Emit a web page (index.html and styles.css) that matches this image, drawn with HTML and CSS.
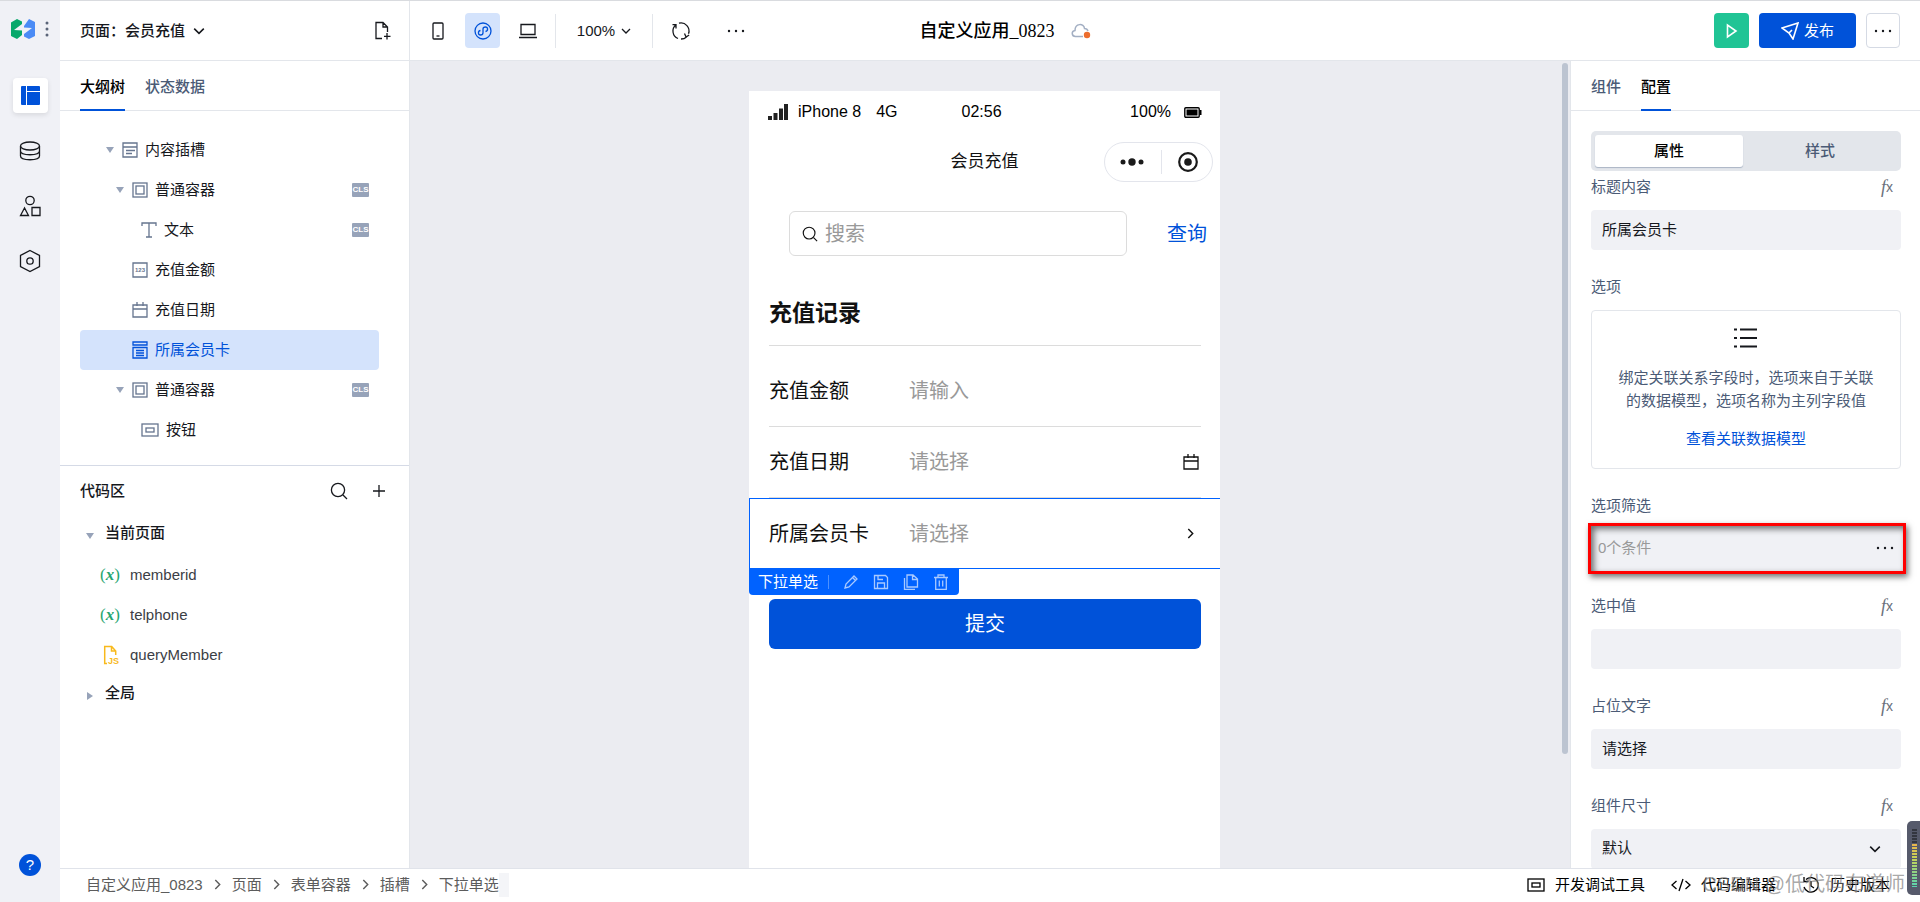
FILE: index.html
```html
<!DOCTYPE html>
<html lang="zh-CN">
<head>
<meta charset="utf-8">
<title>自定义应用_0823</title>
<link rel="stylesheet" href="styles.css">
</head>
<body>
<svg class="defs" width="0" height="0" aria-hidden="true">
  <symbol id="chev-down" viewBox="0 0 10 10"><path d="M1 3l4 4 4-4"/></symbol>
  <symbol id="chev-right" viewBox="0 0 10 10"><path d="M3 1l4 4-4 4"/></symbol>
  <symbol id="box" viewBox="0 0 16 16"><rect x="1" y="1" width="14" height="14"/><rect x="4" y="4" width="8" height="8"/></symbol>
  <symbol id="calendar" viewBox="0 0 16 16"><path d="M1 3h14v12H1zM1 7h14M5 0v4M11 0v4"/></symbol>
  <symbol id="button-box" viewBox="0 0 18 14"><rect x="1" y="1" width="16" height="12"/><rect x="5" y="5" width="8" height="4"/></symbol>
  <symbol id="search" viewBox="0 0 18 18"><circle cx="8" cy="8" r="6.6"/><path d="M13 13l4 4"/></symbol>
  <symbol id="dots" viewBox="0 0 18 4"><g fill="currentColor" stroke="none"><circle cx="2" cy="2" r="1.2"/><circle cx="9" cy="2" r="1.2"/><circle cx="16" cy="2" r="1.2"/></g></symbol>
</svg>
<div class="app">
  <nav class="rail">
    <div class="brand">
      <svg width="24" height="20" viewBox="0 0 24 20">
        <path fill="#07a86b" d="M6 0l5 2.500V5L7 8l-4 3 8 .5V16l-5 4-6-3V3.500z"/>
        <path fill="#4b8bf5" d="M18 0l6 3v14l-6 3-5-2.500V15l4-3 4-3-8-.5V7z"/>
      </svg>
      <svg width="4" height="16" viewBox="0 0 4 16" fill="#5a6478"><circle cx="2" cy="2" r="1.5"/><circle cx="2" cy="8" r="1.5"/><circle cx="2" cy="14" r="1.5"/></svg>
    </div>
    <button class="rail-btn active" aria-label="页面"><svg width="19" height="19" viewBox="0 0 19 19" fill="#0052d9"><path d="M1 0h4v19H1a1 1 0 0 1-1-1V1a1 1 0 0 1 1-1zM6 0h12a1 1 0 0 1 1 1v4H6zM6 6h13v12a1 1 0 0 1-1 1H6z"/></svg></button>
    <button class="rail-btn" aria-label="数据"><svg class="line" width="22" height="20" viewBox="0 0 22 20"><ellipse cx="11" cy="5" rx="9.5" ry="4"/><path d="M1.5 5v10c0 5 19 5 19 0V5M1.5 10c0 5 19 5 19 0"/></svg></button>
    <button class="rail-btn" aria-label="组件"><svg class="line" width="22" height="22" viewBox="0 0 22 22"><circle cx="11" cy="5.500" r="4.200"/><path d="M5.500 13l-4 7.500h8zM13 12.500h8v8h-8z"/></svg></button>
    <button class="rail-btn" aria-label="设置"><svg class="line" width="22" height="24" viewBox="0 0 22 24"><path d="M11 1.500l9.500 5v11l-9.500 5-9.500-5v-11z"/><circle cx="11" cy="12" r="3.200"/></svg></button>
    <button class="help" aria-label="帮助">?</button>
  </nav>

  <header class="header">
    <div class="page-pick">
      <button class="page-name">页面：会员充值<svg class="line" width="12" height="12"><use href="#chev-down"/></svg></button>
      <button class="plain" aria-label="新建页面"><svg class="line" width="18" height="20" viewBox="0 0 18 20"><path d="M8 17.500H2V1.500h7l4.500 4.500v5M9 1.500V6h4.500M13 12v6.500M10 15.300h6.500"/></svg></button>
    </div>
    <div class="header-mid">
      <div class="tools">
        <button class="tool" aria-label="手机"><svg class="line" width="12" height="18" viewBox="0 0 12 18"><rect x="1" y="1" width="10" height="16" rx="1"/><path d="M4.500 14h3"/></svg></button>
        <button class="tool on" aria-label="小程序"><svg class="line" width="18" height="18" viewBox="0 0 18 18"><circle cx="9" cy="9" r="8"/><path d="M6.500 8.500C3.500 9 4 13 6.500 13 8 13 9 12 9 10.800V7C9 6 10 5 11.500 5c2.500 0 3 4 0 4.500"/></svg></button>
        <button class="tool" aria-label="桌面"><svg class="line" width="18" height="16" viewBox="0 0 18 16"><path d="M2 1.500h14v10H2zM0 14.500h18"/></svg></button>
        <button class="zoom">100%<svg class="line" width="10" height="10"><use href="#chev-down"/></svg></button>
        <button class="tool" aria-label="刷新"><svg class="line" width="20" height="20" viewBox="0 0 20 20"><path d="M7 17.500A8 8 0 0 1 5 3.800M8 2.200a8 8 0 0 1 9.500 10.500M15.500 16A8 8 0 0 1 10 18M5 7.500V3.700H1.500M13.500 12.500l1.600 3.500 3-2"/></svg></button>
        <button class="tool more" aria-label="更多"><svg width="18" height="4"><use href="#dots"/></svg></button>
      </div>
      <div class="title"><h1>自定义应用_0823</h1>
        <svg width="20" height="16" viewBox="0 0 20 16" fill="none" stroke="#a3afc3" stroke-width="1.500"><path d="M12 13.500H4.500C.5 13.500 0 8 4 7.500 4 0 13 0 13.500 5.500c1.500 0 3 1 3.500 2.500"/><circle cx="16" cy="12" r="3.200" fill="#ed6e2e" stroke="none"/></svg>
      </div>
    </div>
    <div class="actions">
      <button class="play" aria-label="预览"><svg width="12" height="16" viewBox="0 0 12 16"><path d="M1.500 2v12l8.500-6z"/></svg></button>
      <button class="publish"><svg width="18" height="18" viewBox="0 0 18 18"><path d="M1 6l16-5-5 16-4-6zM8 11l3-3"/></svg>发布</button>
      <button class="etc" aria-label="更多"><svg width="18" height="4"><use href="#dots"/></svg></button>
    </div>
  </header>

  <aside class="left">
    <div class="tabs"><button class="tab current">大纲树</button><button class="tab">状态数据</button></div>
    <ul class="tree">
      <li class="node d0"><i class="caret"></i><svg class="ico" width="16" height="16" viewBox="0 0 16 16"><path d="M1 1h14v14H1zM1 5h14M4 8.500h9M4 11.500h6"/></svg>内容插槽</li>
      <li class="node d1"><i class="caret"></i><svg class="ico" width="16" height="16"><use href="#box"/></svg>普通容器<b class="cls">CLS</b></li>
      <li class="node d2"><svg class="ico" width="16" height="16" viewBox="0 0 16 16"><path d="M1 4V1h14v3M8 1v14M5 15h6"/></svg>文本<b class="cls">CLS</b></li>
      <li class="node d1 leaf"><svg class="ico" width="16" height="16" viewBox="0 0 16 16"><path d="M1 1h14v14H1z"/><text x="8" y="10" text-anchor="middle" class="t123">123</text></svg>充值金额</li>
      <li class="node d1 leaf"><svg class="ico" width="16" height="16"><use href="#calendar"/></svg>充值日期</li>
      <li class="node d1 leaf selected"><svg class="ico" width="16" height="18" viewBox="0 0 16 18"><path d="M1 1h14v3H1zM1 6.500h14V17H1zM4 9.500h8M4 12h8M4 14.500h8"/></svg>所属会员卡</li>
      <li class="node d1"><i class="caret"></i><svg class="ico" width="16" height="16"><use href="#box"/></svg>普通容器<b class="cls">CLS</b></li>
      <li class="node d2"><svg class="ico" width="18" height="14"><use href="#button-box"/></svg>按钮</li>
    </ul>
    <section class="code">
      <div class="code-head"><h2>代码区</h2>
        <button class="plain" aria-label="搜索"><svg class="line" width="18" height="18"><use href="#search"/></svg></button>
        <button class="plain" aria-label="添加"><svg class="line" width="12" height="12" viewBox="0 0 12 12"><path d="M6 0v12M0 6h12"/></svg></button>
      </div>
      <div class="group"><i class="caret"></i>当前页面</div>
      <ul class="vars">
        <li><span class="var">(<em>x</em>)</span>memberid</li>
        <li><span class="var">(<em>x</em>)</span>telphone</li>
        <li><span class="js"><svg width="17" height="20" viewBox="0 0 17 20"><path d="M4 18.500H1.700V1.500h7l4 4.500v4M8.500 1.500V6h4"/><text x="5" y="19">JS</text></svg></span>queryMember</li>
      </ul>
      <div class="group"><i class="caret closed"></i>全局</div>
    </section>
  </aside>

  <main class="canvas">
    <div class="phone">
      <div class="status">
        <svg width="20" height="16" viewBox="0 0 20 16" fill="#222"><path d="M0 12h4v4H0zM5.500 9h4v7h-4zM11 4.500h4V16h-4zM16 0h4v16h-4z"/></svg>
        <span class="carrier">iPhone 8</span><span>4G</span>
        <span class="clock">02:56</span>
        <span class="power">100%</span>
        <svg width="18" height="11" viewBox="0 0 18 11"><rect x=".8" y=".8" width="14.400" height="9.400" rx="1" fill="none" stroke="#000" stroke-width="1.400"/><path d="M2.500 2.500h11v6h-11zM15.500 3h2v5h-2z"/></svg>
      </div>
      <div class="navbar"><span class="nav-title">会员充值</span>
        <div class="capsule">
          <svg width="24" height="8" viewBox="0 0 24 8" fill="#1a1a1a"><circle cx="3" cy="4" r="2.500"/><circle cx="12" cy="4" r="3.700"/><circle cx="21" cy="4" r="2.500"/></svg>
          <i></i>
          <svg width="20" height="20" viewBox="0 0 20 20"><circle cx="10" cy="10" r="8.800" fill="none" stroke="#1a1a1a" stroke-width="2.200"/><circle cx="10" cy="10" r="3.800" fill="#1a1a1a"/></svg>
        </div>
      </div>
      <div class="search-row">
        <label class="search-box"><svg class="line" width="16" height="16"><use href="#search"/></svg><input type="text" placeholder="搜索" aria-label="搜索"></label>
        <a href="#" class="query">查询</a>
      </div>
      <div class="form">
        <h2>充值记录</h2>
        <div class="field first"><label for="amount">充值金额</label><input id="amount" type="text" placeholder="请输入"></div>
        <div class="field"><label for="date">充值日期</label><input id="date" type="text" placeholder="请选择"><svg class="line" width="16" height="16"><use href="#calendar"/></svg></div>
        <div class="field picked"><label for="card">所属会员卡</label><input id="card" type="text" placeholder="请选择"><svg class="line" width="11" height="11"><use href="#chev-right"/></svg>
          <div class="float-bar"><span>下拉单选</span>
            <button aria-label="编辑"><svg width="16" height="16" viewBox="0 0 16 16"><path d="M2 14l1-4 8-8 3 3-8 8zM9.500 3.500l3 3"/></svg></button>
            <button aria-label="保存"><svg width="16" height="16" viewBox="0 0 16 16"><path d="M1.500 1.500h11l2 2v11h-13zM4.500 14V9h7v5M5 2v3.500h5"/></svg></button>
            <button aria-label="复制"><svg width="16" height="16" viewBox="0 0 16 16"><path d="M4 1h6l4.500 4v8H4zM9.500 1v4.500h5M1.500 4v11.500H12"/></svg></button>
            <button aria-label="删除"><svg width="16" height="16" viewBox="0 0 16 16"><path d="M1 3.500h14M2.700 3.500v12h10.600v-12M5 3V1h6v2M6.300 6.500v6M9.700 6.500v6"/></svg></button>
          </div>
        </div>
        <button class="submit">提交</button>
      </div>
    </div>
    <i class="scrollbar"></i>
  </main>

  <aside class="right">
    <div class="tabs"><button class="tab">组件</button><button class="tab current">配置</button></div>
    <div class="config">
      <div class="segment"><button class="seg on">属性</button><button class="seg">样式</button></div>
      <div class="item"><div class="cap"><label for="c-title">标题内容</label><button class="fx" aria-label="表达式"><i>f</i>x</button></div><input id="c-title" type="text" value="所属会员卡"></div>
      <div class="item"><div class="cap"><span>选项</span></div>
        <div class="options">
          <svg class="line" width="24" height="20" viewBox="0 0 24 20"><path d="M0 1.500h3M6 1.500h17M0 10h3M6 10h17M0 18.500h3M6 18.500h17"/></svg>
          <p>绑定关联关系字段时，选项来自于关联<br>的数据模型，选项名称为主列字段值</p>
          <a href="#">查看关联数据模型</a>
        </div></div>
      <div class="item"><div class="cap"><span>选项筛选</span></div>
        <div class="filter">0个条件<button class="plain" aria-label="编辑条件"><svg width="18" height="4"><use href="#dots"/></svg></button></div></div>
      <div class="item"><div class="cap"><label for="c-val">选中值</label><button class="fx" aria-label="表达式"><i>f</i>x</button></div><input id="c-val" type="text"></div>
      <div class="item"><div class="cap"><label for="c-ph">占位文字</label><button class="fx" aria-label="表达式"><i>f</i>x</button></div><input id="c-ph" type="text" value="请选择"></div>
      <div class="item"><div class="cap"><label for="c-size">组件尺寸</label><button class="fx" aria-label="表达式"><i>f</i>x</button></div>
        <div class="select"><select id="c-size"><option>默认</option></select><svg class="line" width="12" height="12"><use href="#chev-down"/></svg></div></div>
    </div>
  </aside>

  <footer class="footer">
    <nav class="crumbs">
      <a href="#">自定义应用_0823</a><svg class="line" width="11" height="11"><use href="#chev-right"/></svg>
      <a href="#">页面</a><svg class="line" width="11" height="11"><use href="#chev-right"/></svg>
      <a href="#">表单容器</a><svg class="line" width="11" height="11"><use href="#chev-right"/></svg>
      <a href="#">插槽</a><svg class="line" width="11" height="11"><use href="#chev-right"/></svg>
      <a href="#" class="here">下拉单选</a>
    </nav>
    <div class="dev">
      <button><svg class="line" width="18" height="14"><use href="#button-box"/></svg>开发调试工具</button>
      <button><svg class="line" width="20" height="14" viewBox="0 0 20 14"><path d="M5.500 3L1 7l4.500 4M14.500 3L19 7l-4.500 4M12 1L8 13"/></svg>代码编辑器</button>
      <button><svg class="line" width="18" height="18" viewBox="0 0 18 18"><path d="M4 3.500A7.300 7.300 0 1 1 2 11M2 1v4.500h4.500M9 5v5l3 2"/></svg>历史版本</button>
    </div>
  </footer>
  <div class="watermark">CSDN @低代码布道师</div>
  <div class="meter"><i></i></div>
</div>
</body>
</html>
```
FILE: styles.css
```css
* { box-sizing: border-box; }
body {
  margin: 0;
  font: 15px/24px "Liberation Sans", "Noto Sans CJK SC", sans-serif;
  color: #16181d;
}
button, input, select { font: inherit; color: inherit; border: 0; padding: 0; background: none; outline: 0; }
button { display: flex; align-items: center; justify-content: center; cursor: pointer; }
a { color: inherit; text-decoration: none; }
ul { list-style: none; margin: 0; padding: 0; }
h1, h2, p { margin: 0; }
svg { flex: none; }
.defs { position: absolute; }
.line { fill: none; stroke: currentColor; stroke-width: 1.3; }
.plain { flex: none; }

.app {
  position: relative;
  height: 100vh;
  overflow: hidden;
  display: grid;
  grid-template: 60px minmax(0, 1fr) 34px / 60px 350px minmax(0, 1fr) 350px;
  grid-template-areas:
    "rail head head head"
    "rail left canvas right"
    "rail foot foot foot";
  border-top: 1px solid #d9dbdf;
}

/* icon rail */
.rail {
  grid-area: rail;
  background: #f0f1f6;
  display: flex;
  flex-direction: column;
  align-items: center;
  gap: 20px;
  padding: 16px 0 26px;
}
.brand { display: flex; align-items: center; gap: 10px; height: 24px; margin-bottom: 17px; }
.rail-btn { width: 35px; height: 35px; border-radius: 4px; }
.rail-btn.active { background: #fff; box-shadow: 0 2px 5px #0000001a; }
.help {
  width: 22px; height: 22px;
  margin-top: auto;
  border-radius: 50%;
  background: #0052d9;
  color: #fff;
}

/* header */
.header {
  grid-area: head;
  display: grid;
  grid-template-columns: 350px minmax(0, 1fr) 350px;
  border-bottom: 1px solid #e3e6eb;
}
.page-pick {
  display: flex;
  align-items: center;
  justify-content: space-between;
  padding: 0 17px 0 20px;
  border-right: 1px solid #e3e6eb;
}
.page-name { gap: 8px; font-weight: 500; }
.header-mid { display: grid; grid-template-columns: 1fr auto 1fr; align-items: center; }
.tools { display: flex; align-items: center; gap: 10px; padding-left: 10px; }
.tool { width: 35px; height: 35px; border-radius: 4px; }
.tool.on { background: #d4e3fc; color: #0052d9; }
.more { margin-left: 10px; }
.zoom {
  gap: 6px;
  width: 98px; height: 34px;
  border: solid #e3e6eb;
  border-width: 0 1px;
}
.title { display: flex; align-items: center; gap: 16px; padding-left: 30px; }
.title h1 { font: 500 18px/24px "Liberation Serif", "Noto Sans CJK SC", serif; color: #000; }
.actions { display: flex; align-items: center; justify-content: flex-end; gap: 10px; padding-right: 20px; }
.actions button { height: 35px; border-radius: 4px; }
.play { width: 35px; background: #20c495; }
.play svg, .publish svg { fill: none; stroke: #fff; stroke-width: 1.6; }
.publish { width: 97px; gap: 5px; background: #0052d9; color: #fff; }
.actions .etc { width: 34px; border: 1px solid #d5dae4; }

/* shared tabs */
.tabs { display: flex; gap: 20px; height: 50px; padding: 0 20px; border-bottom: 1px solid #e3e6eb; flex: none; }
.tab { height: 50px; padding-top: 3px; border-bottom: 2px solid transparent; color: #4b5b76; font-weight: 500; }
.tab.current { color: #000; border-color: #0052d9; }

/* outline panel */
.left { grid-area: left; border-right: 1px solid #e3e6eb; overflow: hidden; }
.tree { padding: 19px 30px 15px 20px; border-bottom: 1px solid #d5dae6; }
.node {
  display: flex;
  align-items: center;
  gap: 7px;
  height: 40px;
  border-radius: 4px;
}
.d0 { padding-left: 26px; }
.d1 { padding-left: 36px; }
.d2 { padding-left: 61px; }
.leaf { padding-left: 52px; }
.ico { fill: none; stroke: #66758f; stroke-width: 1.3; }
.t123 { font: bold 6px "Liberation Sans", sans-serif; fill: #66758f; stroke: none; }
.selected { background: #d4e3fc; color: #0052d9; }
.selected .ico { stroke: #0052d9; }
.caret { width: 8px; height: 6px; margin-right: 1px; background: #97a3b9; clip-path: polygon(0 0, 100% 0, 50% 100%); }
.caret.closed { width: 6px; height: 8px; margin: 0 2px 0 1px; clip-path: polygon(0 0, 100% 50%, 0 100%); }
.cls {
  margin: 0 10px 0 auto;
  width: 17px;
  background: #97a3b9;
  border-radius: 1px;
  color: #fff;
  font: bold 8px/14px "Liberation Sans", sans-serif;
  text-align: center;
}
.code { padding: 5px 24px 0 20px; }
.code-head { display: flex; align-items: center; gap: 25px; height: 40px; }
.code-head h2 { flex: 1; font-size: 15px; font-weight: 500; }
.group { display: flex; align-items: center; gap: 10px; height: 44px; padding-left: 6px; font-weight: 500; }
.group .caret { align-self: flex-end; margin-bottom: 16px; }
.vars + .group { height: 36px; }
.vars + .group .caret { margin-bottom: 11px; }
.vars li { display: flex; align-items: center; height: 40px; padding-left: 20px; color: #3b3e45; }
.var, .js { width: 30px; color: #27a56f; font: 17px/24px "Liberation Serif", serif; }
.var em { font-weight: bold; }
.js { display: flex; align-items: center; padding-left: 3px; }
.js svg { fill: none; stroke: #f8b91c; stroke-width: 1.5; }
.js text { font: bold 9px "Liberation Sans", sans-serif; fill: #f8b91c; stroke: none; }

/* canvas */
.canvas { grid-area: canvas; position: relative; background: #ebecf1; padding-top: 30px; overflow: hidden; }
.phone { width: 471px; height: 100%; margin-left: 339px; background: #fff; color: #111; }
.status { display: flex; align-items: center; height: 42px; padding: 0 18px 0 19px; font-size: 16px; color: #000; }
.status .carrier { margin: 0 15px 0 10px; }
.status .clock { margin-left: 64px; }
.status .power { margin: 0 13px 0 auto; }
.navbar {
  display: grid;
  grid-template-columns: 1fr auto 1fr;
  align-items: center;
  height: 58px;
  padding: 0 7px;
}
.nav-title { grid-column: 2; font-size: 17px; }
.capsule {
  display: flex;
  align-items: center;
  justify-content: space-between;
  justify-self: end;
  width: 109px; height: 40px;
  padding: 0 14px 0 15px;
  border: 1px solid #e3e5ec;
  border-radius: 20px;
}
.capsule i { width: 1px; height: 24px; background: #e3e5ec; }
.search-row { display: flex; align-items: center; gap: 40px; padding: 20px 13px 0 40px; font-size: 20px; }
.search-box {
  flex: 1;
  display: flex;
  align-items: center;
  gap: 7px;
  height: 45px;
  padding: 0 12px;
  border: 1px solid #dcdcdc;
  border-radius: 6px;
}
.search-box input { flex: 1; min-width: 0; }
.phone input::placeholder { color: #999; opacity: 1; }
.query { color: #0052d9; }
.form { padding: 0 19px 0 20px; font-size: 20px; }
.form h2 { padding: 41px 0 16px; font-size: 23px; line-height: 32px; border-bottom: 1px solid #dcdcdc; }
.field { display: flex; align-items: center; height: 71px; border-bottom: 1px solid #dcdcdc; }
.field.first { height: 81px; padding-top: 10px; }
.field label { width: 140px; }
.field input { flex: 1; min-width: 0; }
.field > svg { margin-right: 2px; }
.field.picked {
  position: relative;
  margin: 0 -19px 30px -20px;
  padding: 0 22px 0 19px;
  border: solid #0062ff;
  border-width: 1px 0 1px 1px;
}
.float-bar {
  position: absolute;
  left: -1px; top: 100%;
  display: flex;
  align-items: center;
  gap: 14px;
  height: 27px;
  padding: 0 10px 0 9px;
  background: #0062ff;
  border-radius: 0 0 4px 4px;
  color: #fff;
  font-size: 15px;
}
.float-bar span { padding-right: 10px; border-right: 1px solid #4c91ff; line-height: 14px; }
.float-bar svg { fill: none; stroke: #a8c9ff; stroke-width: 1.3; }
.submit { width: 100%; height: 50px; border-radius: 6px; background: #0052d9; color: #fff; }
.scrollbar { position: absolute; right: 2px; top: 2px; width: 6px; height: 691px; max-height: 100%; border-radius: 3px; background: #bcc4d1; }

/* config panel */
.right { grid-area: right; display: flex; flex-direction: column; border-left: 1px solid #e3e6eb; overflow: hidden; }
.config { padding: 20px 19px 0 20px; overflow: hidden; }
.segment { display: flex; height: 40px; margin-bottom: 4px; padding: 4px; border-radius: 5px; background: #e3e6eb; }
.seg { flex: 51; border-radius: 3px; color: #4b5b76; font-weight: 500; }
.seg.on { flex: 49; background: #fff; color: #000; box-shadow: 0 1px 1px #aab4c5; }
.item { margin-bottom: 25px; }
.cap { display: flex; justify-content: space-between; padding-right: 8px; margin-bottom: 11px; color: #4b5b76; }
.fx { height: 24px; font: 14px/24px "Liberation Sans", sans-serif; color: #6a707b; }
.fx i { font-family: "Liberation Serif", serif; font-size: 18px; }
.item > input, .select select {
  display: block;
  width: 100%; height: 40px;
  padding: 0 11px 3px;
  border-radius: 4px;
  background: #f0f1f5;
}
.options {
  display: flex;
  flex-direction: column;
  align-items: center;
  height: 159px;
  padding-top: 17px;
  border: 1px solid #e3e6eb;
  border-radius: 4px;
}
.options svg { stroke-width: 2; }
.options p { margin: 18px 0 15px; line-height: 23px; text-align: center; color: #4b5b76; }
.options a { color: #0052d9; }
.filter {
  display: flex;
  align-items: center;
  justify-content: space-between;
  height: 51px;
  margin: -6px -5px -5px -3px;
  padding: 0 9px 2px 7px;
  border: 3px solid #f00;
  background: #f0f1f5;
  color: #999;
  box-shadow: 2px 3px 6px #0000008c, inset 3px 3px 6px #0000008c;
}
.filter button { color: #16181d; }
.select { display: grid; align-items: center; }
.select select { grid-area: 1 / 1; appearance: none; }
.select svg { grid-area: 1 / 1; justify-self: end; margin-right: 20px; pointer-events: none; }

/* footer */
.footer {
  grid-area: foot;
  display: flex;
  align-items: center;
  justify-content: space-between;
  padding: 0 30px 2px 26px;
  border-top: 1px solid #e0e3ea;
  color: #000;
}
.crumbs { display: flex; align-items: center; gap: 9px; color: #5c5c5c; }
.crumbs .here { padding-right: 10px; background: linear-gradient(to left, #f4f5f8 10px, #fff 10px); }
.dev { display: flex; gap: 26px; }
.dev button { gap: 10px; }
.watermark { position: absolute; right: 15px; bottom: 4px; font-size: 20px; line-height: 28px; color: #777777a6; pointer-events: none; }
.meter {
  position: absolute;
  right: 0; bottom: 7px;
  width: 13px; height: 74px;
  padding: 8px 3px 8px 5px;
  border-radius: 5px 0 0 5px;
  background: #565a6b;
}
.meter i {
  display: block;
  height: 100%;
  background: repeating-linear-gradient(#0000 0 2px, #565a6b 2px 3px), linear-gradient(#33363f 25%, #eab54c 26%, #c6d257 50%, #58d5b0);
}
```
